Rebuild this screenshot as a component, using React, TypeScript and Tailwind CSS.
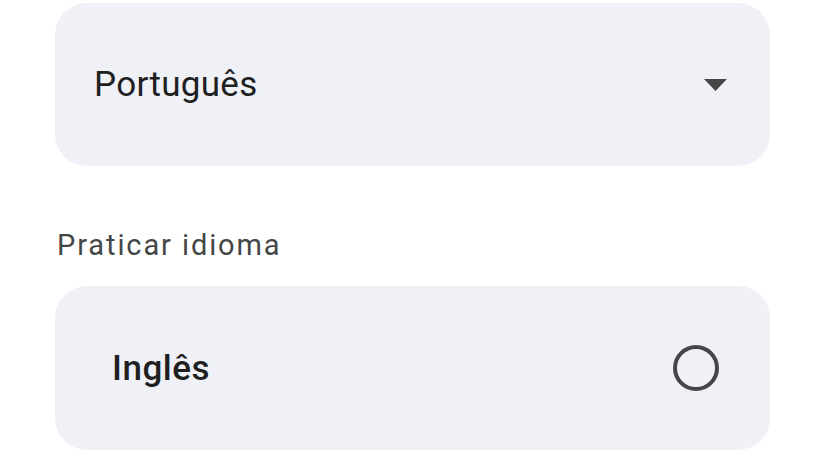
import React from "react";

export default function App() {
  return (
    <div className="w-[825px] h-[464px] bg-white overflow-hidden" style={{ fontFamily: "Roboto, 'Noto Sans', sans-serif" }}>
      <div className="flex flex-col px-[55px] pt-[3px]">
        <div className="h-[163px] rounded-[32px] bg-[#eff1f7] flex items-center justify-between pl-[39px] pr-[43px]">
          <span className="text-[35px] leading-[40px] text-[#1f1f1f] tracking-[0.3px]">Português</span>
          <svg width="23" height="12" viewBox="0 0 23 12">
            <path d="M0 0 L23 0 L11.5 12 Z" fill="#444746" />
          </svg>
        </div>
        <div className="mt-[63px] text-[29px] leading-[32px] text-[#444746] pl-[2px] tracking-[1.9px]">Praticar idioma</div>
        <div className="mt-[25px] h-[164px] rounded-[32px] bg-[#eff1f7] flex items-center justify-between pl-[57px] pr-[51px]">
          <span className="text-[35px] leading-[40px] font-medium text-[#1f1f1f] tracking-[0.5px] mt-[2px]">Inglês</span>
          <svg width="46" height="46" viewBox="0 0 46 46">
            <circle cx="23" cy="23" r="21" fill="none" stroke="#444746" strokeWidth="4" />
          </svg>
        </div>
      </div>
    </div>
  );
}
